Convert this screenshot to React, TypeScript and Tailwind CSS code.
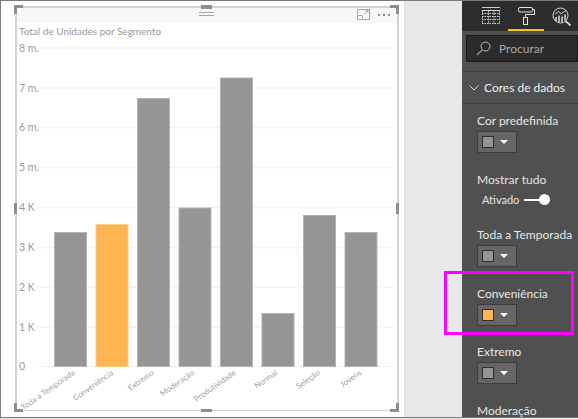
const gridLines = [
  { y: 48, label: '8 m.' },
  { y: 88, label: '7 m.' },
  { y: 127.5, label: '6 m.' },
  { y: 167.5, label: '5 m.' },
  { y: 207.5, label: '4 K' },
  { y: 247.5, label: '3 K' },
  { y: 287, label: '2 K' },
  { y: 327, label: '1 K' },
  { y: 366.5, label: '0' },
]

const bars = [
  { x: 54.5, w: 32, top: 232.5, name: 'Toda a Temporada', labelX: 21 },
  { x: 96, w: 32, top: 224.5, name: 'Conveniência', labelX: 18, color: '#fdb64f', edge: '#fdd08e' },
  { x: 137.5, w: 32, top: 98.5, name: 'Extremo', labelX: 17 },
  { x: 179, w: 32, top: 208, name: 'Moderação', labelX: 16 },
  { x: 220.5, w: 32, top: 78, name: 'Produtividade', labelX: 16 },
  { x: 262, w: 32, top: 313.5, name: 'Normal', labelX: 16 },
  { x: 303.5, w: 32, top: 215.5, name: 'Seleção', labelX: 17 },
  { x: 345, w: 32, top: 232.5, name: 'Jovens', labelX: 17 },
]

function Chart() {
  return (
    <svg className="block" width={405} height={417} viewBox="0 0 405 417">
      <text x={19} y={35} fontSize={10} fill="#9a9a9a" fontFamily="Lato, sans-serif">
        Total de Unidades por Segmento
      </text>
      {gridLines.map((g) => (
        <g key={g.label}>
          <line x1={38} x2={394} y1={g.y} y2={g.y} stroke="#f2f2f2" strokeWidth={1.5} />
          <text x={19} y={g.y + 3.5} fontSize={10.5} fill="#9a9a9a" fontFamily="Lato, sans-serif">
            {g.label}
          </text>
        </g>
      ))}
      {bars.map((b) => (
        <g key={b.name}>
          <rect
            x={b.x}
            y={b.top}
            width={b.w}
            height={366.5 - b.top}
            fill={b.color ?? '#959595'}
            stroke={b.edge ?? '#b4b4b4'}
            strokeWidth={1}
          />
          <text
            transform={`translate(${b.x + b.labelX} 374) rotate(-35)`}
            textAnchor="end"
            fontSize={8}
            fill="#9f9f9f"
            fontFamily="Lato, sans-serif"
          >
            {b.name}
          </text>
        </g>
      ))}
    </svg>
  )
}

function Handle({ className }: { className: string }) {
  return <div className={`absolute bg-[#8f8f8f] ${className}`} />
}

function ColorRow({ label, color = '#959595' }: { label: string; color?: string }) {
  return (
    <div className="flex h-[58.5px] flex-col">
      <div className="h-[22px] text-[12px] leading-[24px] whitespace-nowrap text-[#e6e6e6]">{label}</div>
      <div className="flex h-[22px] w-[40px] items-center gap-[6px] border border-[#3d3d3d] bg-[#666666] pl-[4px]">
        <div className="h-[12px] w-[12px] border border-[#2e2e2e]" style={{ background: color }} />
        <svg width={8} height={4} viewBox="0 0 8 4">
          <path d="M0 0h8L4 4z" fill="#ffffff" />
        </svg>
      </div>
    </div>
  )
}

function TabIcons() {
  return (
    <div className="relative h-[31px] shrink-0 bg-[#2d2d2d]">
      <svg className="absolute left-[20px] top-[7px]" width={18} height={17} viewBox="0 0 18 17" fill="none" stroke="#d0d0d0">
        <path d="M0 0.5h18M0 3.5h18" />
        <path d="M0 6.5h18M0 9.5h18M0 12.5h18M0 16.5h18" strokeDasharray="1.5 1" />
        <path d="M0.5 4v13M6.5 4v13M12 4v13M17.5 4v13" strokeDasharray="1.5 1" />
      </svg>
      <svg className="absolute left-[56px] top-[7px]" width={17} height={18} viewBox="0 0 17 18" fill="none" stroke="#e2e2e2">
        <rect x={0.5} y={0.5} width={14} height={4.5} rx={1.5} />
        <path d="M14.5 2.5h2v5H7.5v3" />
        <rect x={5.5} y={10.5} width={4} height={7} />
      </svg>
      <svg className="absolute left-[90px] top-[7px]" width={20} height={19} viewBox="0 0 20 19" fill="none" stroke="#d8d8d8">
        <circle cx={8.5} cy={8.5} r={7.5} />
        <path d="M13.5 14l5 4.5" strokeWidth={1.8} />
        <path d="M3 7l3.5-2.5 3 2L14 3.5" />
        <path d="M4 10v4M7 8.5v6.5M10 9.5v5.5M13 7.5v5.5" strokeWidth={1.6} />
      </svg>
      <div className="absolute bottom-0 left-[46px] h-[2px] w-[36px] bg-[#f2c811]" />
    </div>
  )
}

function Panel() {
  return (
    <div className="flex h-[418px] w-[116px] shrink-0 flex-col overflow-hidden bg-[#505050]">
      <TabIcons />
      <div className="mt-[4px] ml-[4px] flex h-[27px] shrink-0 items-center gap-[8px] border border-[#1a1a1a] bg-[#2b2b2b] pl-[9px]">
        <svg width={15} height={15} viewBox="0 0 15 15" fill="none">
          <circle cx={9.5} cy={5.5} r={4.5} stroke="#b9c4cc" />
          <path d="M6 9l-5 5" stroke="#b08d5e" strokeWidth={1.4} />
        </svg>
        <span className="text-[12px] text-[#a8a8a8]">Procurar</span>
      </div>
      <div className="mt-[9px] flex h-[33px] shrink-0 items-center gap-[5px] border-y border-[#3f3f3f] pl-[7px]">
        <svg width={10} height={6} viewBox="0 0 10 6" fill="none" stroke="#d8d8d8">
          <path d="M0.5 0.5L5 5l4.5-4.5" />
        </svg>
        <span className="pt-[1px] text-[12px] whitespace-nowrap text-[#efefef]">Cores de dados</span>
      </div>
      <div className="flex flex-col pt-[5px] pl-[15px]">
        <ColorRow label="Cor predefinida" />
        <div className="flex h-[55.5px] flex-col">
          <div className="h-[22px] text-[12px] leading-[24px] text-[#e6e6e6]">Mostrar tudo</div>
          <div className="flex items-center gap-[5px] pl-[5px]">
            <span className="text-[11px] leading-[20px] text-[#e6e6e6]">Ativado</span>
            <div className="relative h-[2px] w-[26px] bg-white">
              <div className="absolute -top-[5px] right-0 h-[11px] w-[11px] rounded-full bg-white" />
            </div>
          </div>
        </div>
        <ColorRow label="Toda a Temporada" />
        <ColorRow label="Conveniência" color="#fdb64f" />
        <ColorRow label="Extremo" />
        <ColorRow label="Moderação" />
      </div>
    </div>
  )
}

export default function App() {
  return (
    <div className="relative flex h-[419px] w-[578px] overflow-hidden bg-[#e8e8e8] font-['Lato',sans-serif]">
      <div className="flex-1">
        <div className="relative h-[418px] w-[405px] border-r border-[#dcdcdc] bg-white">
          <div className="absolute left-[15px] top-[7px] h-[16px] w-[382px] bg-[#f7f7f7]" />
          <div className="absolute left-0 top-0">
            <Chart />
          </div>
          {/* visual frame and its handles */}
          <div className="absolute left-[15px] top-[6px] h-[405px] w-[384px] border-2 border-b-[1px] border-[#d2d2d2]" />
          <Handle className="left-[14px] top-[5px] h-[3px] w-[9px]" />
          <Handle className="left-[14px] top-[5px] h-[9px] w-[3px]" />
          <Handle className="left-[390px] top-[5px] h-[3px] w-[9px]" />
          <Handle className="left-[396px] top-[5px] h-[9px] w-[3px]" />
          <Handle className="left-[14px] top-[403px] h-[9px] w-[3px]" />
          <Handle className="left-[14px] top-[409px] h-[3px] w-[9px]" />
          <Handle className="left-[396px] top-[403px] h-[9px] w-[3px]" />
          <Handle className="left-[390px] top-[409px] h-[3px] w-[9px]" />
          <Handle className="left-[201px] top-[5px] h-[4px] w-[11px]" />
          <Handle className="left-[201px] top-[409px] h-[3px] w-[11px]" />
          <Handle className="left-[14px] top-[203px] h-[11px] w-[3px]" />
          <Handle className="left-[396px] top-[203px] h-[11px] w-[3px]" />
          {/* drag grip and visual actions */}
          <div className="absolute left-[199px] top-[12px] h-[4px] w-[15px] border-y border-[#a6a6a6]" />
          <svg className="absolute left-[357px] top-[9px]" width={13} height={11} viewBox="0 0 13 11" fill="none" stroke="#a9a9a9">
            <rect x={0.5} y={0.5} width={12} height={10} />
            <path d="M0.5 6.5h5v4M7 5l4-3.5M8.5 1.5H11V4" />
          </svg>
          <div className="absolute left-[378px] top-[14px] flex gap-[3px]">
            <div className="h-[2px] w-[2px] bg-[#8a8a8a]" />
            <div className="h-[2px] w-[2px] bg-[#8a8a8a]" />
            <div className="h-[2px] w-[2px] bg-[#8a8a8a]" />
          </div>
        </div>
      </div>
      <Panel />
      {/* screenshot edge and callout */}
      <div className="pointer-events-none absolute left-0 top-0 h-[418px] w-full border-y border-l border-[#7a7a7a]" />
      <div className="pointer-events-none absolute left-[444px] top-[271px] h-[64px] w-[130px] border-[3px] border-[#ff00ff]" />
    </div>
  )
}
